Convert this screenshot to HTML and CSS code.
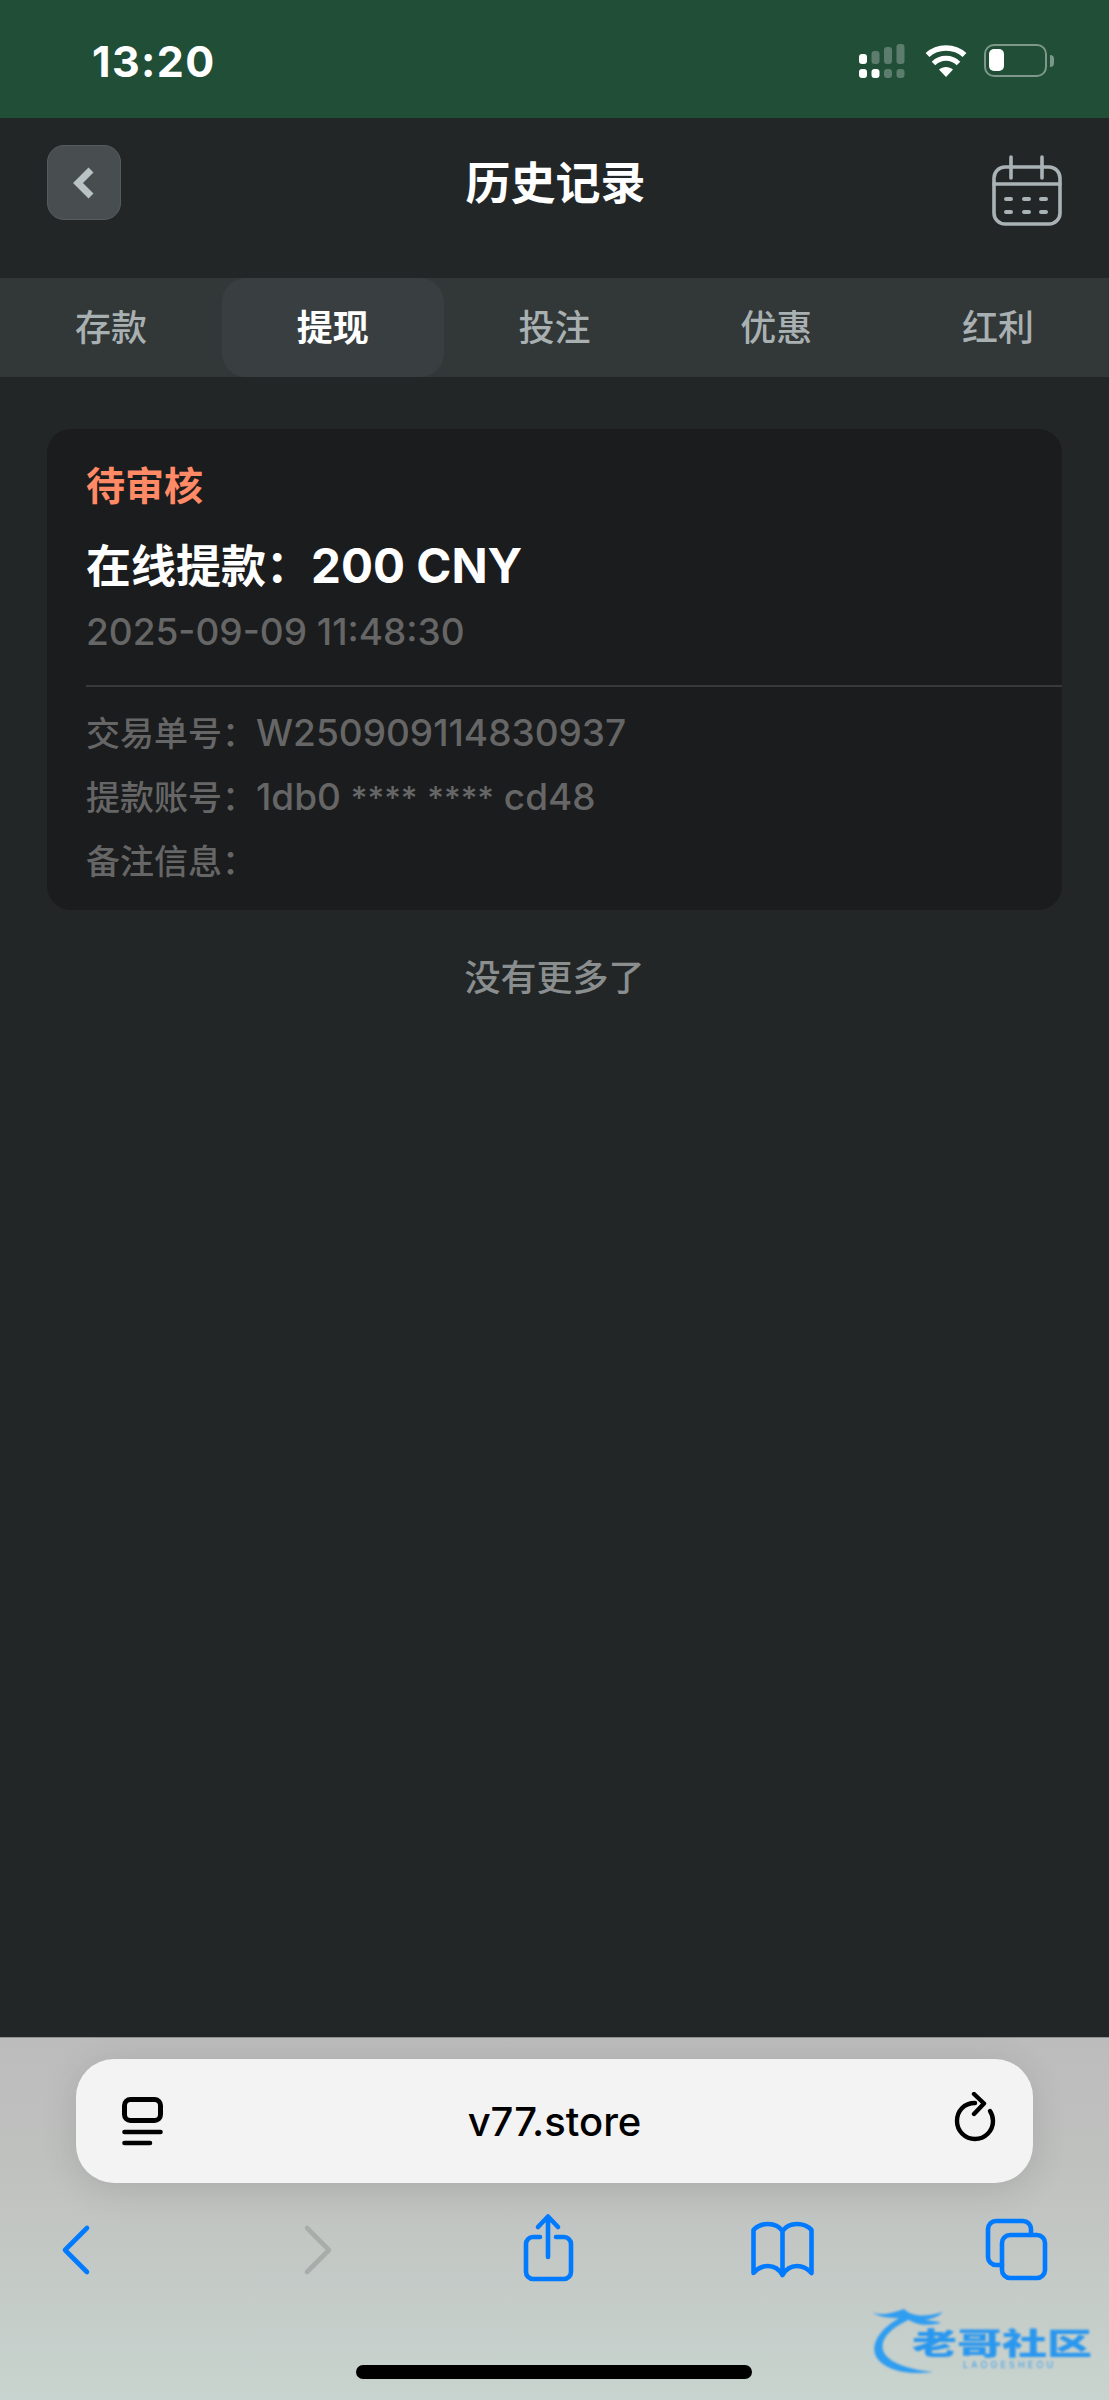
FILE: index.html
```html
<!DOCTYPE html>
<html lang="zh">
<head>
<meta charset="utf-8">
<title>历史记录</title>
<link rel="stylesheet" href="styles.css">
</head>
<body>
<div class="page">
  <div class="status">
    <span class="time">13:20</span>
    <div class="status-icons">
      <svg class="signal" width="50" height="36" viewBox="0 0 50 36">
        <g fill="#fff">
          <rect x="0" y="10" width="8" height="10" rx="3"/>
          <rect x="0" y="25" width="8" height="9" rx="3"/>
          <rect x="12.500" y="25" width="8" height="9" rx="3"/>
        </g>
        <g fill="#fff" fill-opacity=".27">
          <rect x="12.500" y="7" width="8" height="13" rx="3"/>
          <rect x="25" y="3" width="8" height="17" rx="3"/>
          <rect x="37.500" y="0" width="8" height="20" rx="3"/>
          <rect x="25" y="25" width="8" height="9" rx="3"/>
          <rect x="37.500" y="25" width="8" height="9" rx="3"/>
        </g>
      </svg>
      <svg class="wifi" width="44" height="34" viewBox="0 0 44 34">
        <path d="M22 33 L15 25.500 C19 22 25 22 29 25.500 Z" fill="#fff"/>
        <path d="M9.500 19.500 C16.500 12.500 27.500 12.500 34.500 19.500" fill="none" stroke="#fff" stroke-width="5"/>
        <path d="M3.500 11 C13.500 1.500 30.500 1.500 40.500 11" fill="none" stroke="#fff" stroke-width="5.500"/>
      </svg>
      <div class="battery">
        <div class="battery-body"><div class="battery-level"></div></div>
        <div class="battery-cap"></div>
      </div>
    </div>
  </div>

  <header class="topbar">
    <div class="back-btn">
      <svg width="30" height="40" viewBox="0 0 30 40"><path d="M22 7 L9 20 L22 33" fill="none" stroke="#b9c2c4" stroke-width="7"/></svg>
    </div>
    <h1 class="title">历史记录</h1>
    <svg class="calendar" width="74" height="85" viewBox="0 0 74 85" fill="none" stroke="#a9b2b5" stroke-width="3.600" stroke-linecap="round">
      <rect x="4" y="22" width="66" height="57" rx="11"/>
      <path d="M4 39 H70 M21 12 V33 M52 12 V33"/>
      <path d="M16 54 H21 M34 54 H39 M51 54 H56 M16 67 H21 M34 67 H39 M51 67 H56" stroke-width="4"/>
    </svg>
  </header>

  <nav class="tabs">
    <div class="tab">存款</div>
    <div class="tab tab-active">提现</div>
    <div class="tab">投注</div>
    <div class="tab">优惠</div>
    <div class="tab">红利</div>
  </nav>

  <main class="content">
    <section class="card">
      <div class="card-status">待审核</div>
      <div class="card-amount">在线提款：<span class="amount-value">200 CNY</span></div>
      <div class="card-date">2025-09-09 11:48:30</div>
      <div class="card-divider"></div>
      <div class="card-row">交易单号：<span class="row-value">W250909114830937</span></div>
      <div class="card-row">提款账号：<span class="row-value">1db0 <span class="stars">****</span> <span class="stars">****</span> cd48</span></div>
      <div class="card-row">备注信息：</div>
    </section>
    <div class="no-more">没有更多了</div>
  </main>

  <footer class="toolbar">
    <div class="urlbar">
      <svg class="tabs-icon" width="41" height="52" viewBox="0 0 41 52" fill="none" stroke="#000" stroke-linecap="round">
        <rect x="2.500" y="2.500" width="36" height="21" rx="6" stroke-width="5"/>
        <path d="M2.500 35 H38.500 M2.500 46 H28" stroke-width="4.600"/>
      </svg>
      <span class="url-text">v77.store</span>
      <svg class="reload-icon" width="42" height="50" viewBox="0 0 42 50" fill="none" stroke="#000" stroke-width="4.400" stroke-linecap="round" stroke-linejoin="round">
        <path d="M21 11 C10 11 3 19 3 29 C3 39 11 47 21 47 C31 47 39 39 39 29 C39 25 38 22 36 19"/>
        <path d="M20 2 L30 11.500 L20 22"/>
      </svg>
    </div>
    <div class="nav-row">
      <svg class="nav-icon" viewBox="0 0 76 76"><path class="blue" d="M47 18 L25 40 L47 62"/></svg>
      <svg class="nav-icon" viewBox="0 0 76 76"><path class="gray" d="M32 18 L54 40 L32 62"/></svg>
      <svg class="nav-icon" viewBox="0 0 76 76">
        <path class="blue" d="M31 27 H24 a7 7 0 0 0 -7 7 V62 a7 7 0 0 0 7 7 H55 a7 7 0 0 0 7 -7 V34 a7 7 0 0 0 -7 -7 H47"/>
        <path class="blue" d="M39 47 V7 M29 17 L39 6.500 L49 17"/>
      </svg>
      <svg class="nav-icon" viewBox="0 0 76 76">
        <path class="blue" d="M38.500 21 C35 16 29 14 24 14 C18 14 13 16 9.500 20 V63 C14 58 19 56 24 56 C30 56 35 59 38.500 65 C42 59 47 56 53 56 C58 56 63 58 67.500 63 V20 C64 16 59 14 53 14 C48 14 42 16 38.500 21 V65"/>
      </svg>
      <svg class="nav-icon" viewBox="0 0 76 76">
        <rect class="blue" x="24" y="25" width="43" height="43" rx="8"/>
        <path class="blue" d="M24 55 H18 a8 8 0 0 1 -8 -8 V19 a8 8 0 0 1 8 -8 H45 a8 8 0 0 1 8 8 V25"/>
      </svg>
    </div>
    <div class="home-indicator"></div>
    <div class="watermark">
      <svg class="dragon" width="90" height="70" viewBox="0 0 90 70">
        <path d="M36 8 C14 18 0 34 4 48 C9 62 32 70 62 66 C42 64 16 58 12 44 C9 32 22 20 42 12 Z" fill="#2f9df0"/>
        <path d="M1 6 C12 11 24 6 33 3 C40 10 52 12 72 6 C66 12 58 13 54 14 C60 15 66 15 70 17 C58 20 44 20 36 12 C24 12 10 13 1 6 Z" fill="#2f9df0"/>
      </svg>
      <span class="wm-cn">老哥社区</span>
      <span class="wm-en">LAOGESHEOU</span>
    </div>
  </footer>
</div>
</body>
</html>
```
FILE: styles.css
```css
* { box-sizing: border-box; }
html, body { margin: 0; padding: 0; }
body {
  background: #222627;
  font-family: Inter, "Noto Sans CJK SC", "Liberation Sans", sans-serif;
}
.page {
  width: 1109px;
  height: 2400px;
  display: flex;
  flex-direction: column;
  overflow: hidden;
}

/* status bar */
.status {
  height: 118px;
  flex: none;
  background: #204e37;
  display: flex;
  justify-content: space-between;
  align-items: flex-start;
  padding: 36px 55px 0 92px;
}
.time {
  color: #fff;
  font-size: 43px;
  font-weight: 700;
  letter-spacing: 1.4px;
  line-height: 50px;
}
.status-icons {
  display: flex;
  align-items: flex-start;
  padding-top: 7px;
}
.signal { margin-top: 1px; margin-right: 15px; }
.wifi { margin-top: 1px; margin-right: 16px; }
.battery { display: flex; align-items: center; margin-top: 1px; }
.battery-body {
  width: 63px;
  height: 33px;
  border: 2.5px solid rgba(255, 255, 255, .42);
  border-radius: 10px;
  padding: 3px;
}
.battery-level {
  width: 15px;
  height: 22px;
  background: #fff;
  border-radius: 5px;
}
.battery-cap {
  width: 4px;
  height: 12px;
  margin-left: 3px;
  background: rgba(255, 255, 255, .42);
  border-radius: 0 4px 4px 0;
}

/* top bar */
.topbar {
  height: 160px;
  flex: none;
  display: flex;
  justify-content: space-between;
  align-items: flex-start;
  padding: 27px 45px 0 47px;
}
.back-btn {
  width: 74px;
  height: 75px;
  border-radius: 17px;
  background: #484e50;
  border: 1px solid #565c5e;
  display: flex;
  align-items: center;
  justify-content: center;
}
.title {
  margin: 0;
  color: #fff;
  font-size: 45px;
  font-weight: 700;
  line-height: 77px;
}
.calendar { display: block; }

/* tabs */
.tabs {
  height: 99px;
  flex: none;
  background: #323738;
  display: grid;
  grid-template-columns: repeat(5, 1fr);
}
.tab {
  display: flex;
  align-items: center;
  justify-content: center;
  padding-bottom: 5px;
  color: #a9b0b2;
  font-size: 36px;
  font-weight: 500;
}
.tab-active {
  background: #393f41;
  border-radius: 24px;
  color: #fff;
  font-weight: 700;
}

/* content */
.content {
  flex: 1;
  padding: 52px 47px 0 47px;
}
.card {
  background: #1b1c1e;
  border-radius: 24px;
  padding: 30px 0 16px 39px;
}
.card-status {
  color: #ff8a65;
  font-size: 39px;
  font-weight: 700;
  line-height: 54px;
}
.card-amount {
  margin-top: 27px;
  color: #fff;
  font-size: 45px;
  font-weight: 700;
  line-height: 54px;
}
.amount-value { font-size: 47.500px; line-height: 0; }
.card-date {
  margin-top: 16px;
  color: #666;
  font-size: 37px;
  font-weight: 500;
  line-height: 44px;
}
.card-divider {
  margin-top: 31px;
  margin-bottom: 15px;
  height: 2px;
  background: #37393b;
}
.card-row {
  color: #666;
  font-size: 34px;
  font-weight: 500;
  line-height: 64px;
  height: 64px;
}
.row-value { font-size: 37px; line-height: 0; }
.stars { font-size: 32px; }
.no-more {
  margin-top: 43px;
  color: #8b8e8f;
  font-size: 36px;
  font-weight: 500;
  line-height: 50px;
  text-align: center;
}

/* browser toolbar */
.toolbar {
  position: relative;
  height: 363px;
  flex: none;
  border-top: 1px solid #8f9190;
  background: linear-gradient(180deg, #bcbcbc 0%, #bfc1bf 35%, #c3c8c5 60%, #c8d4cf 100%);
  padding-top: 21px;
}
.urlbar {
  width: 957px;
  height: 124px;
  margin-left: 76px;
  background: #f3f3f3;
  border-radius: 38px;
  box-shadow: 0 6px 36px rgba(0, 0, 0, .12);
  display: flex;
  align-items: center;
  justify-content: space-between;
  padding: 0 37px 0 46px;
}
.tabs-icon { display: block; margin-top: 4px; }
.reload-icon { display: block; margin-top: -8px; }
.url-text {
  margin-right: 8px;
  color: #000;
  font-size: 40px;
  font-weight: 500;
}
.nav-row {
  display: flex;
  justify-content: space-between;
  margin-top: 27px;
  padding: 0 55px 0 40px;
}
.nav-icon {
  width: 76px;
  height: 76px;
  display: block;
  fill: none;
  stroke-linecap: round;
  stroke-linejoin: round;
}
.blue { fill: none; stroke: #007aff; stroke-width: 4.600; }
.gray { fill: none; stroke: #a8acab; stroke-width: 4.600; }
.home-indicator {
  position: absolute;
  left: 356px;
  bottom: 21px;
  width: 396px;
  height: 14px;
  background: #000;
  border-radius: 7px;
}

/* watermark overlay */
.watermark {
  position: absolute;
  left: 871px;
  top: 268px;
  width: 225px;
  height: 70px;
  filter: blur(.8px);
}
.dragon { position: absolute; left: 0; top: 0; }
.wm-cn {
  position: absolute;
  left: 41px;
  top: 18px;
  color: #2a97ef;
  font-family: "Noto Sans CJK SC", sans-serif;
  font-size: 30px;
  font-weight: 900;
  line-height: 34px;
  white-space: nowrap;
  transform: scaleX(1.5);
  transform-origin: left top;
}
.wm-en {
  position: absolute;
  left: 92px;
  top: 53px;
  color: #3f9fe8;
  font-size: 9px;
  letter-spacing: 3.200px;
  line-height: 11px;
}
```
